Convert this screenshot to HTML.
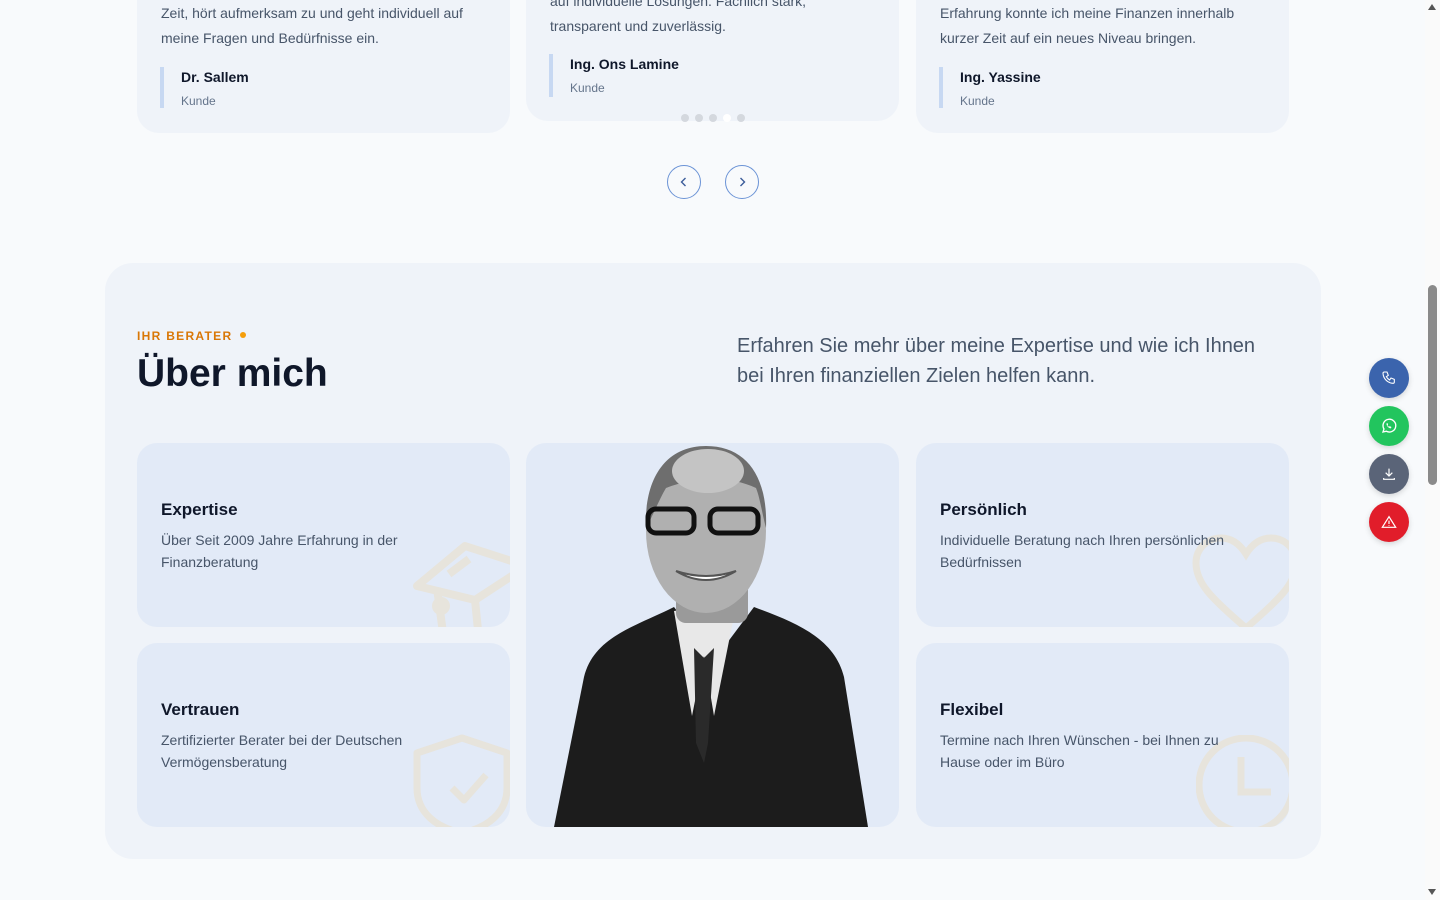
<!DOCTYPE html>
<html><head><meta charset="utf-8"><style>
*{margin:0;padding:0;box-sizing:border-box}
body{width:1440px;height:900px;overflow:hidden;background:#f8fafc;font-family:"Liberation Sans",sans-serif;position:relative;color:#1e293b}
.abs{position:absolute}
.tcard{position:absolute;background:#eff3f9;border-radius:22px}
.tq{font-size:14px;line-height:25px;color:#475569}
.auth{position:absolute;border-left:4px solid #c7d8f2;padding-left:17px}
.auth b{display:block;font-size:14px;color:#0f172a;font-weight:bold;margin-top:2px}
.auth span{display:block;font-size:12px;color:#64748b;margin-top:9px}
.nav{position:absolute;top:165px;width:34px;height:34px;border:1px solid #6b93d6;border-radius:50%;display:flex;align-items:center;justify-content:center}
.sec{position:absolute;left:105px;top:263px;width:1216px;height:596px;background:#eff3f9;border-radius:28px}
.card{position:absolute;background:#e2eaf7;border-radius:20px;width:373px;height:184px;overflow:hidden}
.card h3{position:absolute;left:24px;top:57px;font-size:17px;color:#0f172a}
.card p{position:absolute;left:24px;top:86px;font-size:14px;line-height:22px;color:#475569;width:300px}
.card svg{position:absolute}
.fab{position:absolute;left:1369px;width:40px;height:40px;border-radius:50%;display:flex;align-items:center;justify-content:center;box-shadow:0 2px 6px rgba(0,0,0,.15)}
</style></head><body>
<div class="tcard" style="left:137px;top:-40px;width:373px;height:173px">
<div class="tq abs" style="left:24px;top:41px;width:330px">Zeit, hört aufmerksam zu und geht individuell auf meine Fragen und Bedürfnisse ein.</div>
<div class="auth" style="left:23px;top:107px;height:41px"><b>Dr. Sallem</b><span>Kunde</span></div></div>
<div class="tcard" style="left:526px;top:-40px;width:373px;height:161px">
<div class="tq abs" style="left:24px;top:29px;width:290px">auf individuelle Lösungen. Fachlich stark, transparent und zuverlässig.</div>
<div class="auth" style="left:23px;top:94px;height:43px"><b>Ing. Ons Lamine</b><span>Kunde</span></div></div>
<div class="abs" style="left:681px;top:114px;display:flex;gap:6px">
<i style="width:8px;height:8px;border-radius:50%;background:#d4d8de"></i><i style="width:8px;height:8px;border-radius:50%;background:#d4d8de"></i><i style="width:8px;height:8px;border-radius:50%;background:#d4d8de"></i><i style="width:8px;height:8px;border-radius:50%;background:#fff"></i><i style="width:8px;height:8px;border-radius:50%;background:#d4d8de"></i></div>
<div class="tcard" style="left:916px;top:-40px;width:373px;height:173px">
<div class="tq abs" style="left:24px;top:41px;width:315px">Erfahrung konnte ich meine Finanzen innerhalb kurzer Zeit auf ein neues Niveau bringen.</div>
<div class="auth" style="left:23px;top:107px;height:41px"><b>Ing. Yassine</b><span>Kunde</span></div></div>
<div class="nav" style="left:667px"><svg width="12" height="12" viewBox="0 0 12 12"><path d="M7.5 2L3.5 6l4 4" fill="none" stroke="#3b5c9a" stroke-width="1.4"/></svg></div>
<div class="nav" style="left:725px"><svg width="12" height="12" viewBox="0 0 12 12"><path d="M4.5 2l4 4-4 4" fill="none" stroke="#3b5c9a" stroke-width="1.4"/></svg></div>

<div class="sec"></div>
<div class="abs" style="left:137px;top:329px;font-size:12px;letter-spacing:1.3px;color:#d97706;font-weight:bold">IHR BERATER <span style="display:inline-block;width:6px;height:6px;border-radius:50%;background:#f59e0b;margin-left:3px;vertical-align:2px"></span></div>
<div class="abs" style="left:137px;top:352px;font-size:39px;font-weight:bold;color:#0f172a">Über mich</div>
<div class="abs" style="left:737px;top:331px;width:545px;font-size:20px;line-height:30px;color:#475569">Erfahren Sie mehr über meine Expertise und wie ich Ihnen bei Ihren finanziellen Zielen helfen kann.</div>

<div class="card" style="left:137px;top:443px">
<svg style="left:270px;top:95px" width="120" height="100" viewBox="0 0 120 100" fill="none" stroke="#e7e4dc" stroke-width="8" stroke-linejoin="round"><path d="M10 48L58 8l62 20-52 34z"/><path d="M30 50l6 45M68 62l4 40"/><path d="M42 36l20-15"/><circle cx="34" cy="68" r="5"/></svg>
<h3>Expertise</h3><p>Über Seit 2009 Jahre Erfahrung in der Finanzberatung</p></div>
<div class="card" style="left:137px;top:643px">
<svg style="left:275px;top:90px" width="100" height="100" viewBox="0 0 100 100" fill="none" stroke="#e7e4dc" stroke-width="7" stroke-linejoin="round"><path d="M50 5L95 20v35c0 25-20 40-45 45C25 95 5 80 5 55V20z"/><path d="M40 55l12 12 22-25"/></svg>
<h3>Vertrauen</h3><p>Zertifizierter Berater bei der Deutschen Vermögensberatung</p></div>
<div class="card" style="left:916px;top:443px">
<svg style="left:275px;top:90px" width="110" height="100" viewBox="0 0 110 100" fill="none" stroke="#e7e4dc" stroke-width="7"><path d="M55 95C20 65 5 50 5 30 5 15 17 5 30 5c12 0 20 8 25 16 5-8 13-16 25-16 13 0 25 10 25 25 0 20-15 35-50 65z"/></svg>
<h3>Persönlich</h3><p style="width:320px">Individuelle Beratung nach Ihren persönlichen Bedürfnissen</p></div>
<div class="card" style="left:916px;top:643px">
<svg style="left:280px;top:92px" width="110" height="110" viewBox="0 0 110 110" fill="none" stroke="#e7e4dc" stroke-width="7"><circle cx="50" cy="50" r="47"/><path d="M45 22v35h30"/></svg>
<h3>Flexibel</h3><p style="width:300px">Termine nach Ihren Wünschen - bei Ihnen zu Hause oder im Büro</p></div>
<div class="card" style="left:526px;top:443px;height:384px">
<svg class="abs" style="left:0;top:0" width="374" height="384" viewBox="0 0 374 384">
<path d="M28 384l30-150c10-40 50-50 90-70l30 40 10-30 10 30 30-40c40 15 80 30 90 70l24 150z" fill="#1c1c1c"/>
<path d="M148 168l18 105 12-60 10 60 20-100-30-10z" fill="#e8e8e8"/>
<path d="M168 205l10 10 10-10-6 95-4 20-8-20z" fill="#2a2a2a"/>
<rect x="150" y="130" width="72" height="50" rx="10" fill="#9a9a9a"/>
<ellipse cx="180" cy="88" rx="60" ry="82" fill="#b0b0b0"/>
<path d="M120 85c-2-50 20-82 60-82s62 30 60 82c-4-15-6-30-10-40-25-12-60-12-90 0-6 10-12 25-20 40z" fill="#6e6e6e"/>
<ellipse cx="182" cy="28" rx="36" ry="22" fill="#c4c4c4"/>
<rect x="122" y="66" width="46" height="24" rx="8" fill="none" stroke="#111" stroke-width="5"/>
<rect x="184" y="66" width="48" height="24" rx="8" fill="none" stroke="#111" stroke-width="5"/>
<path d="M150 128q30 18 60 0q-30 10-60 0" fill="#fff" stroke="#555" stroke-width="2"/>
</svg></div>

<div class="fab" style="top:358px;background:#3b64ad"><svg width="16" height="16" viewBox="0 0 24 24" fill="none" stroke="#fff" stroke-width="1.6"><path d="M5 3h4l2 5-3 2a11 11 0 005 5l2-3 5 2v4a2 2 0 01-2 2A16 16 0 013 5a2 2 0 012-2"/></svg></div>
<div class="fab" style="top:406px;background:#22c55e"><svg width="18" height="18" viewBox="0 0 24 24" fill="none" stroke="#fff" stroke-width="1.8"><path d="M4 20l1.3-4A8.5 8.5 0 1 1 8.5 19z"/><path d="M9 9c0 3 2 5 5 6l1-1.5-2-1-1 .8c-1-.5-1.8-1.3-2.3-2.3l.8-1-1-2z" fill="#fff" stroke-width="0.6"/></svg></div>
<div class="fab" style="top:454px;background:#5a6478"><svg width="16" height="16" viewBox="0 0 24 24" fill="none" stroke="#fff" stroke-width="1.8"><path d="M12 4v11M7 10l5 5 5-5M4 18v2h16v-2"/></svg></div>
<div class="fab" style="top:502px;background:#e11d2a"><svg width="16" height="16" viewBox="0 0 24 24" fill="none" stroke="#fff" stroke-width="1.8"><path d="M12 4L2 20h20z"/><path d="M12 10v5M12 17v1"/></svg></div>

<div class="abs" style="left:1425px;top:0;width:15px;height:900px;background:#fafafa"></div>
<div class="abs" style="left:1428px;top:285px;width:9px;height:200px;background:#8a8a8a;border-radius:5px"></div>
<div class="abs" style="left:1428px;top:4px;width:0;height:0;border-left:4px solid transparent;border-right:4px solid transparent;border-bottom:6px solid #555"></div>
<div class="abs" style="left:1428px;top:889px;width:0;height:0;border-left:4px solid transparent;border-right:4px solid transparent;border-top:6px solid #555"></div>
</body></html>
